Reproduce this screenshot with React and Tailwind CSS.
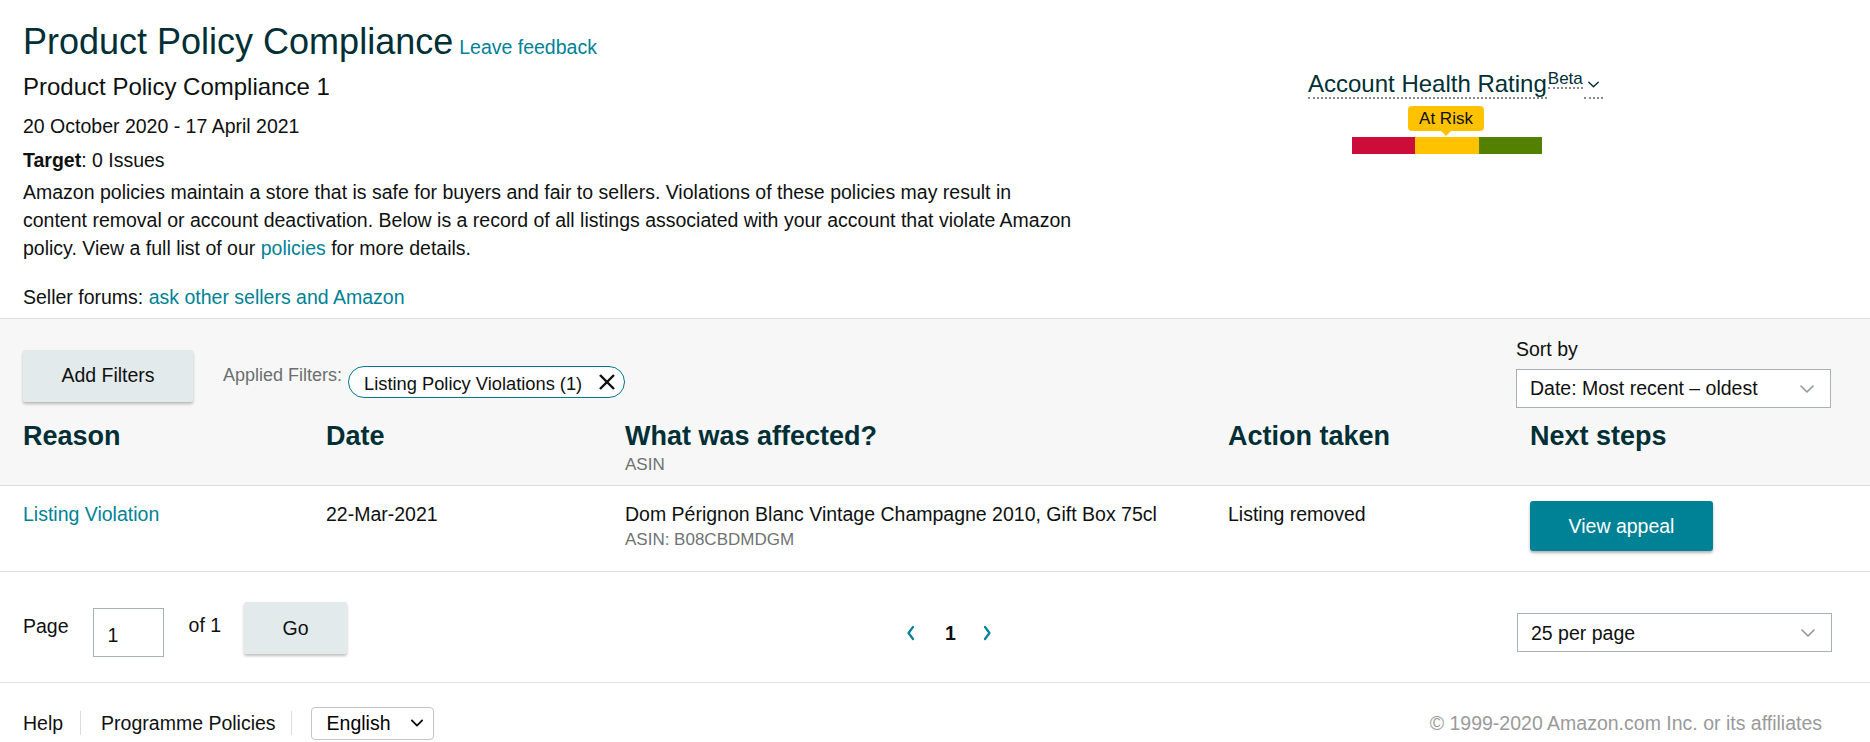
import React from "react";

function ChevronDown({ className = "", color = "#8c9a9d", w = 14, h = 8, sw = 1.6 }) {
  return (
    <svg width={w} height={h} viewBox="0 0 14 8" className={className} fill="none">
      <polyline points="1,1 7,7 13,1" stroke={color} strokeWidth={sw} strokeLinecap="round" strokeLinejoin="round" />
    </svg>
  );
}

function PagerChevron({ dir }) {
  return (
    <svg width="10" height="16" viewBox="0 0 10 16" fill="none">
      {dir === "left" ? (
        <polyline points="7,2 2.5,8 7,14" stroke="#008296" strokeWidth="2.2" strokeLinecap="round" strokeLinejoin="round" />
      ) : (
        <polyline points="3,2 7.5,8 3,14" stroke="#008296" strokeWidth="2.2" strokeLinecap="round" strokeLinejoin="round" />
      )}
    </svg>
  );
}

const cols = "grid grid-cols-[303px_299px_603px_302px_1fr]";

export default function App() {
  return (
    <div className="w-[1870px] h-[742px] overflow-hidden bg-white text-[#0f1111] font-['Liberation_Sans',Arial,sans-serif]">
      {/* Header */}
      <div className="flex px-[23px] pt-[20px]">
        <div className="w-[1285px] shrink-0">
          <div className="flex items-baseline">
            <span className="text-[36px] leading-[43px] text-[#002f36]">Product Policy Compliance</span>
            <a className="ml-[6px] text-[19.5px] leading-[28px] text-[#008296]">Leave feedback</a>
          </div>
          <div className="mt-[9px] text-[24px] leading-[29px] text-[#0f1111]">Product Policy Compliance 1</div>
          <div className="mt-[11px] text-[19.5px] leading-[28px]">20 October 2020 - 17 April 2021</div>
          <div className="mt-[6px] text-[19.5px] leading-[28px]">
            <span className="font-bold">Target</span>: 0 Issues
          </div>
          <p className="mt-[4px] w-[1100px] text-[19.5px] leading-[28px]">
            Amazon policies maintain a store that is safe for buyers and fair to sellers. Violations of these policies may result in
            <br />
            content removal or account deactivation. Below is a record of all listings associated with your account that violate Amazon
            <br />
            policy. View a full list of our <a className="text-[#008296]">policies</a> for more details.
          </p>
          <div className="mt-[21px] text-[19.5px] leading-[28px]">
            Seller forums: <a className="text-[#008296]">ask other sellers and Amazon</a>
          </div>
        </div>
        <div className="flex flex-col items-start pt-[52px]">
          <div className="flex items-start">
            <span className="text-[24px] leading-[24px] text-[#002f36] border-b-2 border-dotted border-[#8a8a8a] pb-[1px]">Account Health Rating</span>
            <span className="ml-[1px] -mt-[2px] text-[17px] leading-[17px] text-[#002f36] border-b-2 border-dotted border-[#8a8a8a]">Beta</span>
            <span className="ml-[1px] w-[19px] h-[27px] flex items-center justify-center border-b-2 border-dotted border-[#8a8a8a]">
              <ChevronDown color="#002f36" w={11} h={7} sw={1.8} />
            </span>
          </div>
          <div className="relative ml-[100px] mt-[7px] h-[25px] w-[76px] rounded-[4px] bg-[#fec200] flex items-center justify-center text-[17px] leading-[18px] text-[#0f1111]">
            At Risk
            <span className="absolute left-1/2 -bottom-[5px] -translate-x-1/2 w-0 h-0 border-l-[6px] border-r-[6px] border-t-[6px] border-l-transparent border-r-transparent border-t-[#fec200]" />
          </div>
          <div className="ml-[44px] mt-[6px] flex h-[17px] w-[190px]">
            <div className="flex-1 bg-[#cc0c39]" />
            <div className="flex-1 bg-[#fec200]" />
            <div className="flex-1 bg-[#538000]" />
          </div>
        </div>
      </div>

      {/* Filters + table header panel */}
      <div className="mt-[7px] border-t border-b border-[#dddddd] bg-[#f7f7f7]">
        <div className="flex justify-between px-[23px] pt-[16px]">
          <div className="flex items-start pt-[15px]">
            <button className="h-[52px] w-[170px] rounded-[2px] bg-[#e3eaec] text-[19.5px] text-[#0f1111] shadow-[0_2px_3px_rgba(0,0,0,0.25)]">
              Add Filters
            </button>
            <span className="ml-[30px] mt-[11px] text-[18px] leading-[28px] text-[#6b6f6f]">Applied Filters:</span>
            <div className="ml-[6px] mt-[16px] flex h-[32px] items-center rounded-full border border-[#00798b] bg-white pl-[15px] pr-[7px]">
              <span className="text-[18.3px] leading-[22px] pt-[3px] text-[#0f1111]">Listing Policy Violations (1)</span>
              <svg width="20" height="20" viewBox="0 0 20 20" className="ml-[15px]" fill="none">
                <line x1="3" y1="3" x2="17" y2="17" stroke="#0f1111" strokeWidth="2.4" />
                <line x1="17" y1="3" x2="3" y2="17" stroke="#0f1111" strokeWidth="2.4" />
              </svg>
            </div>
          </div>
          <div className="mr-[16px] flex flex-col">
            <span className="text-[19.5px] leading-[28px] text-[#0f1111]">Sort by</span>
            <div className="mt-[6px] flex h-[39px] w-[315px] items-center justify-between border border-[#a6b2b5] bg-white pl-[13px] pr-[16px]">
              <span className="text-[19.5px] text-[#0f1111]">Date: Most recent – oldest</span>
              <ChevronDown />
            </div>
          </div>
        </div>
        <div className={`${cols} pl-[23px] pt-[12px] pb-[10px]`}>
          <div className="text-[27px] leading-[32px] font-bold text-[#002f36]">Reason</div>
          <div className="text-[27px] leading-[32px] font-bold text-[#002f36]">Date</div>
          <div>
            <div className="text-[27px] leading-[32px] font-bold text-[#002f36]">What was affected?</div>
            <div className="mt-[3px] text-[17px] leading-[20px] text-[#6f7373]">ASIN</div>
          </div>
          <div className="text-[27px] leading-[32px] font-bold text-[#002f36]">Action taken</div>
          <div className="text-[27px] leading-[32px] font-bold text-[#002f36]">Next steps</div>
        </div>
      </div>

      {/* Data row */}
      <div className={`${cols} pl-[23px] pt-[14px] pb-[20px] border-b border-[#dddddd] text-[19.5px] leading-[28px]`}>
        <div className="text-[#008296]">Listing Violation</div>
        <div>22-Mar-2021</div>
        <div>
          <div>Dom Pérignon Blanc Vintage Champagne 2010, Gift Box 75cl</div>
          <div className="mt-[2px] text-[17px] leading-[20px] text-[#6f7373]">ASIN: B08CBDMDGM</div>
        </div>
        <div>Listing removed</div>
        <div>
          <button className="mt-[1px] h-[50px] w-[183px] rounded-[3px] bg-[#008296] text-[19.5px] text-white shadow-[0_2px_3px_rgba(0,0,0,0.3)]">
            View appeal
          </button>
        </div>
      </div>

      {/* Pagination */}
      <div className="flex h-[111px] items-start border-b border-[#e3e3e3] pl-[23px] pr-[38px] pt-[30px] text-[19.5px] leading-[28px]">
        <span className="mt-[10px]">Page</span>
        <div className="ml-[24px] mt-[6px] flex h-[49px] w-[71px] items-center border border-[#a6b2b5] pl-[14px] pt-[5px]">1</div>
        <span className="ml-[25px] mt-[9px]">of 1</span>
        <button className="ml-[23px] h-[52px] w-[103px] rounded-[2px] bg-[#e3eaec] text-[19.5px] shadow-[0_2px_3px_rgba(0,0,0,0.25)]">Go</button>
        <div className="ml-[559px] mt-[17px] flex h-[28px] items-center">
          <PagerChevron dir="left" />
          <span className="ml-[29px] font-bold">1</span>
          <span className="ml-[26px]"><PagerChevron dir="right" /></span>
        </div>
        <div className="ml-auto mt-[11px] flex h-[39px] w-[315px] items-center justify-between border border-[#a6b2b5] bg-white pl-[13px] pr-[16px]">
          <span>25 per page</span>
          <ChevronDown />
        </div>
      </div>

      {/* Footer */}
      <div className="flex h-[80px] items-center pl-[23px] pr-[48px] text-[19.5px] leading-[28px]">
        <span>Help</span>
        <span className="ml-[17px] h-[24px] w-px bg-[#dddddd]" />
        <span className="ml-[20px]">Programme Policies</span>
        <span className="ml-[15px] h-[24px] w-px bg-[#dddddd]" />
        <div className="ml-[19px] flex h-[33px] w-[123px] items-center justify-between rounded-[4px] border border-[#c4c4c4] bg-white pl-[15px] pr-[10px]">
          <span className="text-black">English</span>
          <ChevronDown color="#111" w={12} h={8} sw={2.2} />
        </div>
        <span className="ml-auto text-[#9a9a9a]">© 1999-2020 Amazon.com Inc. or its affiliates</span>
      </div>
    </div>
  );
}
